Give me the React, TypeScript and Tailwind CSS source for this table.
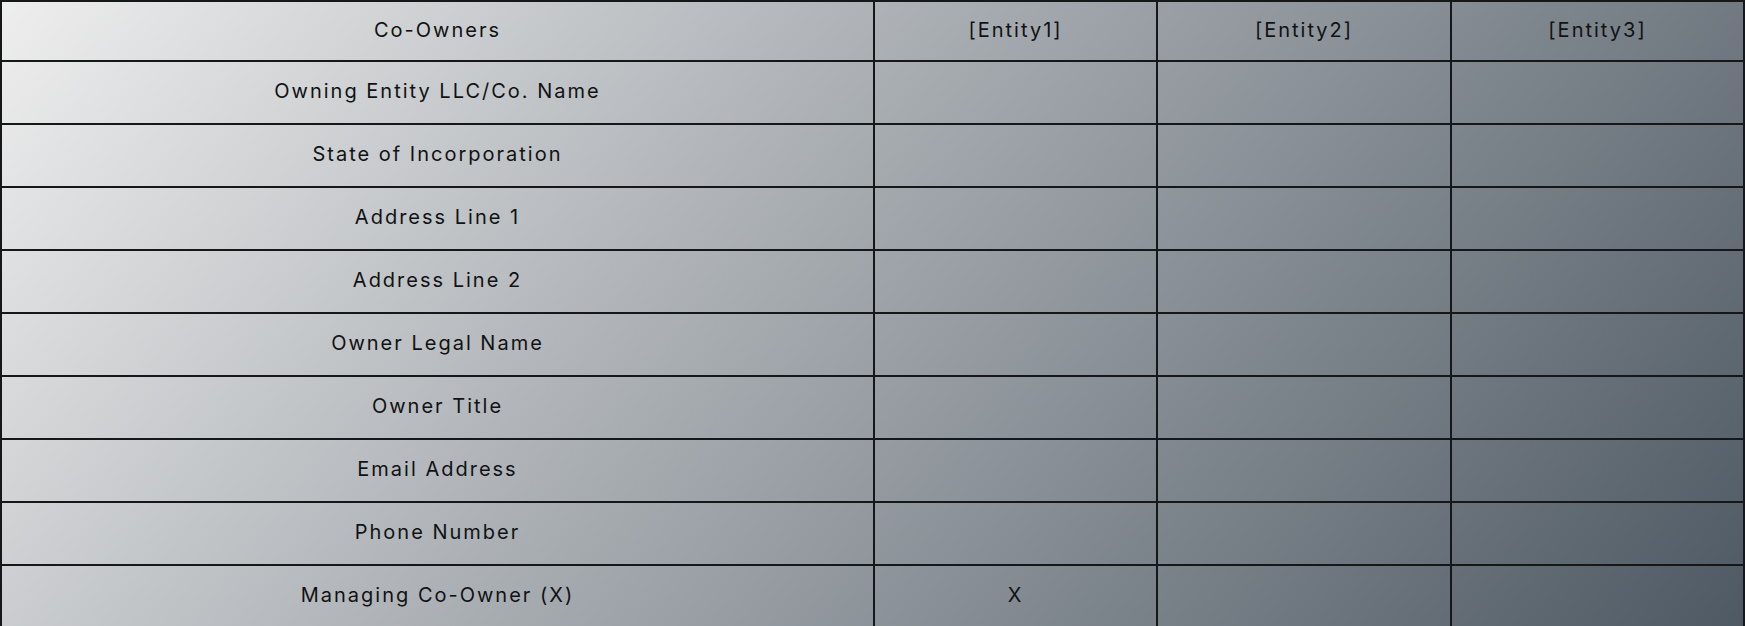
const rows: [string, string][] = [
  ['Owning Entity LLC/Co. Name', ''],
  ['State of Incorporation', ''],
  ['Address Line 1', ''],
  ['Address Line 2', ''],
  ['Owner Legal Name', ''],
  ['Owner Title', ''],
  ['Email Address', ''],
  ['Phone Number', ''],
  ['Managing Co-Owner (X)', 'X']
]

const cell = 'border-2 border-[#151718] text-center align-middle p-0 pb-[3px]'

export default function App() {
  return (
    <div className="h-[626px] w-[1745px] bg-[linear-gradient(128deg,#eeeeee_0%,#a5aaaf_45%,#4e5963_100%)] font-['Inter',sans-serif] text-[20px] tracking-[0.1em] text-[#111213]">
      <table className="h-full w-full table-fixed border-collapse">
        <colgroup>
          <col className="w-[873px]" />
          <col className="w-[283px]" />
          <col className="w-[294px]" />
          <col />
        </colgroup>
        <thead>
          <tr className="h-[60px]">
            <th className={`${cell} font-normal`}>Co-Owners</th>
            <th className={`${cell} font-normal`}>[Entity1]</th>
            <th className={`${cell} font-normal`}>[Entity2]</th>
            <th className={`${cell} font-normal`}>[Entity3]</th>
          </tr>
        </thead>
        <tbody>
          {rows.map(([label, first]) => (
            <tr key={label} className="h-[63px]">
              <td className={cell}>{label}</td>
              <td className={cell}>{first}</td>
              <td className={cell}></td>
              <td className={cell}></td>
            </tr>
          ))}
        </tbody>
      </table>
    </div>
  )
}
